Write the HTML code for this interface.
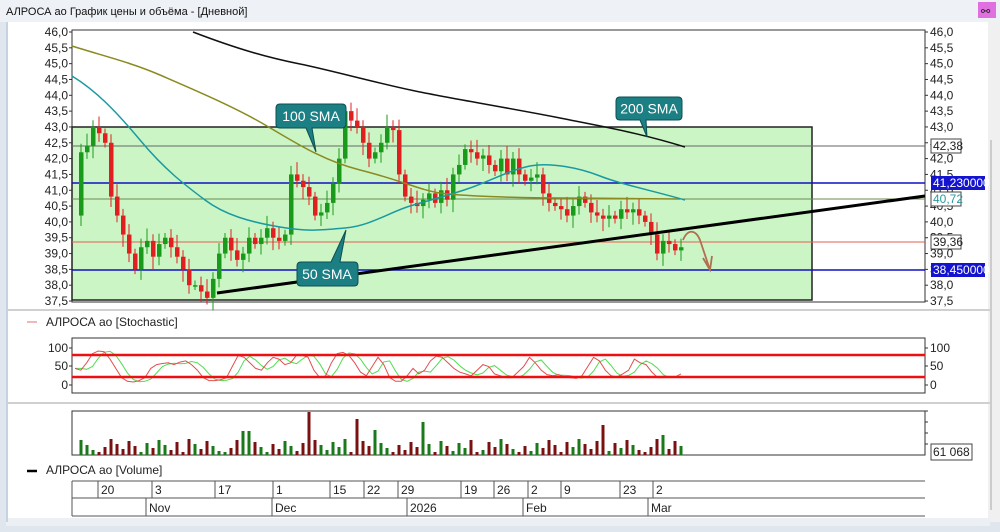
<!DOCTYPE html>
<html><head><meta charset="utf-8">
<style>
html,body{margin:0;padding:0;width:1000px;height:532px;overflow:hidden;background:#fff;font-family:"Liberation Sans","DejaVu Sans",sans-serif;}
svg{display:block}
</style></head><body>
<svg id="s" width="1000" height="532" xmlns="http://www.w3.org/2000/svg" font-family="Liberation Sans, DejaVu Sans, sans-serif">
<rect x="0" y="0" width="1000" height="532" fill="#dfe6ee"/>
<rect x="0" y="0" width="1000" height="22" fill="#eef1f5"/>
<text x="6" y="15" font-size="11" fill="#111">АЛРОСА ао График цены и объёма - [Дневной]</text>
<rect x="978" y="2" width="18" height="16" fill="#e070e0"/>
<text x="981" y="15" font-size="11" fill="#222">⚯</text>
<rect x="6" y="22" width="984" height="500" fill="#fff"/>
<rect x="988" y="22" width="12" height="500" fill="#f0f0f0"/>
<rect x="990" y="140" width="2" height="370" fill="#ccc"/>
<rect x="6" y="518" width="984" height="8" fill="#eceff3"/>
<line x1="6" y1="310" x2="990" y2="310" stroke="#d0d0d0" stroke-width="2"/>
<line x1="6" y1="403" x2="990" y2="403" stroke="#d0d0d0" stroke-width="2"/>
<rect x="6" y="22" width="2" height="500" fill="#c6d3e2"/>
</svg>
<script>
const S=document.getElementById('s');const NS='http://www.w3.org/2000/svg';
function el(t,a,txt){const e=document.createElementNS(NS,t);for(const k in a)e.setAttribute(k,a[k]);if(txt!==undefined)e.textContent=txt;S.appendChild(e);return e;}
const Y=v=>32+(46-v)*31.65;
const FS=12;
el('rect',{x:72,y:30,width:853,height:272,fill:'#fff',stroke:'#333','stroke-width':1});
el('rect',{x:72,y:127,width:740,height:173,fill:'#ccf5c6',stroke:'#222','stroke-width':1.5});
el('line',{x1:72,y1:146,x2:925,y2:146,stroke:'#666','stroke-width':1});
el('line',{x1:72,y1:183,x2:925,y2:183,stroke:'#1010c0','stroke-width':1.5});
el('line',{x1:72,y1:199,x2:925,y2:199,stroke:'#6a8a50','stroke-width':1});
el('line',{x1:72,y1:242,x2:925,y2:242,stroke:'#e06050','stroke-width':1});
el('line',{x1:72,y1:270,x2:925,y2:270,stroke:'#1010c0','stroke-width':1.5});
for(let i=0;i<=17;i++){const v=46-i*0.5;const y=Y(v);const t=v.toFixed(1).replace('.',',');
 el('text',{x:68,y:y+4,'font-size':FS,'text-anchor':'end',fill:'#222'},t);
 el('line',{x1:69,y1:y,x2:72,y2:y,stroke:'#333'});
 el('text',{x:930,y:y+4,'font-size':FS,fill:'#222'},t);
 el('line',{x1:925,y1:y,x2:928,y2:y,stroke:'#333'});}
const C=[40.2,42.2,42.4,43.0,42.8,42.5,40.8,40.2,39.6,39.0,38.5,39.2,39.4,38.9,39.3,39.5,39.2,38.9,38.5,38.0,38.0,37.8,37.6,38.2,39.0,39.5,39.1,38.8,39.0,39.5,39.3,39.5,39.8,39.5,39.4,39.6,41.5,41.3,41.1,40.8,40.2,40.3,40.6,41.2,42.0,43.5,43.2,43.0,42.5,42.0,42.2,42.5,43.0,42.9,41.5,40.8,40.6,40.5,40.7,40.9,40.6,41.0,40.7,41.5,41.8,42.3,42.2,42.0,42.1,41.8,41.6,42.0,41.5,42.0,41.5,41.3,41.4,41.5,40.9,40.6,40.5,40.4,40.2,40.5,40.8,40.6,40.3,40.2,40.1,40.2,40.1,40.4,40.3,40.4,40.2,40.0,39.6,39.0,39.4,39.3,39.1,39.2];
const n=C.length;const x0=75,dx=(681-75)/(n-1);const dirs=[];
for(let i=1;i<n;i++){const o=C[i-1],c=C[i];const x=x0+i*dx;const up=c>=o;dirs.push(up);
 const col=up?'#1a9a1a':'#e02020';const hi=Math.max(o,c)+0.15+((i*37)%5)*0.06,lo=Math.min(o,c)-0.15-((i*53)%5)*0.06;
 el('line',{x1:x,y1:Y(hi),x2:x,y2:Y(lo),stroke:col,'stroke-width':1});
 const t=Y(Math.max(o,c)),h=Math.max(1.5,Math.abs(Y(o)-Y(c)));
 el('rect',{x:x-2,y:t,width:4.5,height:h,fill:col});}
el('path',{d:'M193,32 C240,50 270,58 300,64 S380,84 420,92 S520,110 560,118 S640,133 685,147',fill:'none',stroke:'#111','stroke-width':1.5});
el('path',{d:'M72,46 C100,55 130,62 160,75 S230,105 260,122 S320,160 360,170 S420,190 440,193 S520,198 560,198 S650,199 680,199',fill:'none',stroke:'#8a8a20','stroke-width':1.5});
el('path',{d:'M72,76 C95,90 115,110 140,140 S185,185 205,200 S250,222 280,227 S320,230 345,228 S390,212 410,206 S450,195 470,188 S510,170 530,166 S580,168 600,176 S650,190 685,200',fill:'none',stroke:'#1a9aa0','stroke-width':1.5});
el('line',{x1:217,y1:293,x2:925,y2:196,stroke:'#000','stroke-width':3});
el('path',{d:'M683,240 C688,228 696,230 700,240 L710,270 M703,258 L710,270 L712,256',fill:'none',stroke:'#b07050','stroke-width':1.8});
function call(x,y,w,h,px,py,t,bx){el('path',{d:`M${x+4},${y} h${w-8} q4,0 4,4 v${h-8} q0,4 -4,4 H${bx+6} L${px},${py} L${bx},${y+h} H${x+4} q-4,0 -4,-4 v-${h-8} q0,-4 4,-4 Z`,fill:'#1b7f83',stroke:'#0c4f52','stroke-width':1});
 el('text',{x:x+w/2,y:y+h/2+5,'font-size':14,'text-anchor':'middle',fill:'#fff'},t);}
call(276,104,70,24,316,152,'100 SMA',306);
call(616,97,66,23,647,137,'200 SMA',640);
el('path',{d:'M301,262 h30 L346,230 L340,262 h14 q4,0 4,4 v16 q0,4 -4,4 h-53 q-4,0 -4,-4 v-16 q0,-4 4,-4 Z',fill:'#1b7f83',stroke:'#0c4f52','stroke-width':1});
el('text',{x:327,y:279,'font-size':14,'text-anchor':'middle',fill:'#fff'},'50 SMA');
el('rect',{x:931,y:139,width:30,height:14,fill:'#fff',stroke:'#444'});el('text',{x:933,y:150,'font-size':FS,fill:'#222'},'42,38');
el('rect',{x:931,y:176,width:54,height:14,fill:'#1414d0'});el('text',{x:933,y:187,'font-size':FS,fill:'#fff'},'41,230000');
el('rect',{x:931,y:192,width:30,height:14,fill:'#fff',stroke:'#444'});el('text',{x:933,y:203,'font-size':FS,fill:'#2a9aa0'},'40,72');
el('rect',{x:931,y:235,width:30,height:14,fill:'#fff',stroke:'#444'});el('text',{x:933,y:246,'font-size':FS,fill:'#222'},'39,36');
el('rect',{x:931,y:263,width:54,height:14,fill:'#1414d0'});el('text',{x:933,y:274,'font-size':FS,fill:'#fff'},'38,450000');
el('line',{x1:27,y1:322,x2:37,y2:322,stroke:'#e07070'});
el('text',{x:46,y:326,'font-size':FS,fill:'#222'},'АЛРОСА ао [Stochastic]');
el('rect',{x:72,y:338,width:853,height:55,fill:'#fff',stroke:'#333'});
[[100,348],[50,366],[0,385]].forEach(([v,y])=>{el('text',{x:68,y:y+4,'font-size':FS,'text-anchor':'end',fill:'#222'},v);el('text',{x:930,y:y+4,'font-size':FS,fill:'#222'},v);el('line',{x1:69,y1:y,x2:72,y2:y,stroke:'#333'});el('line',{x1:925,y1:y,x2:928,y2:y,stroke:'#333'});});
const K=[45,40,60,85,92,90,70,45,20,10,8,12,20,45,55,58,60,55,62,65,55,40,20,12,12,14,20,50,80,75,60,45,40,60,75,70,55,60,80,80,75,40,20,25,60,85,88,80,60,35,25,50,75,55,20,10,10,25,45,30,40,65,78,75,60,45,35,30,25,40,55,50,30,25,20,20,35,50,75,60,40,28,25,28,22,20,18,25,50,75,65,40,25,22,30,40,70,60,55,35,20,20,22,22,30];
function stochP(arr,sh){let p='';for(let i=0;i<arr.length;i++){const j=Math.max(0,i-sh);const v=sh?(arr[j]+arr[Math.max(0,j-1)])/2:arr[i];const x=75+i*(681-75)/(arr.length-1);p+=(i?'L':'M')+x.toFixed(1)+','+(385-v*0.37).toFixed(1);}return p;}
el('path',{d:stochP(K,1),fill:'none',stroke:'#50dd50','stroke-width':1});
el('path',{d:stochP(K,0),fill:'none',stroke:'#e05050','stroke-width':1});
el('line',{x1:72,y1:355,x2:925,y2:355,stroke:'#ee1010','stroke-width':2.5});
el('line',{x1:72,y1:377,x2:925,y2:377,stroke:'#ee1010','stroke-width':2.5});
el('rect',{x:72,y:411,width:853,height:44,fill:'#fff',stroke:'#333'});
[411,422,433,444].forEach(y=>el('line',{x1:925,y1:y,x2:928,y2:y,stroke:'#333'}));
for(let i=0;i<dirs.length;i++){const x=x0+(i+1)*dx;let h=4+((i*73+11)%13);if(i%7==3)h=3;if(i==38)h=43;if(i==57)h=33;if(i==46)h=36;if(i==49)h=25;if(i==27||i==28)h=24;if(i==87)h=30;if(i==97)h=20;
 el('rect',{x:x-1.5,y:455-h,width:3,height:h,fill:dirs[i]?'#1a7a1a':'#7a1010'});}
el('rect',{x:931,y:444,width:41,height:16,fill:'#fff',stroke:'#444'});el('text',{x:933,y:456,'font-size':FS,fill:'#222'},'61 068');
el('line',{x1:27,y1:471,x2:37,y2:471,stroke:'#000','stroke-width':2.5});
el('text',{x:46,y:474,'font-size':FS,fill:'#222'},'АЛРОСА ао [Volume]');
el('line',{x1:72,y1:481,x2:925,y2:481,stroke:'#555'});el('line',{x1:72,y1:498,x2:925,y2:498,stroke:'#555'});el('line',{x1:72,y1:516,x2:925,y2:516,stroke:'#555'});
el('line',{x1:72,y1:481,x2:72,y2:516,stroke:'#555'});
[[98,'20'],[152,'3'],[215,'17'],[273,'1'],[330,'15'],[364,'22'],[398,'29'],[461,'19'],[494,'26'],[528,'2'],[561,'9'],[620,'23'],[653,'2']].forEach(([x,t])=>{el('line',{x1:x,y1:481,x2:x,y2:498,stroke:'#555'});el('text',{x:x+3,y:494,'font-size':FS,fill:'#222'},t);});
[[146,'Nov'],[272,'Dec'],[407,'2026'],[523,'Feb'],[648,'Mar']].forEach(([x,t])=>{el('line',{x1:x,y1:498,x2:x,y2:516,stroke:'#555'});el('text',{x:x+3,y:512,'font-size':FS,fill:'#222'},t);});
</script>
</body></html>
